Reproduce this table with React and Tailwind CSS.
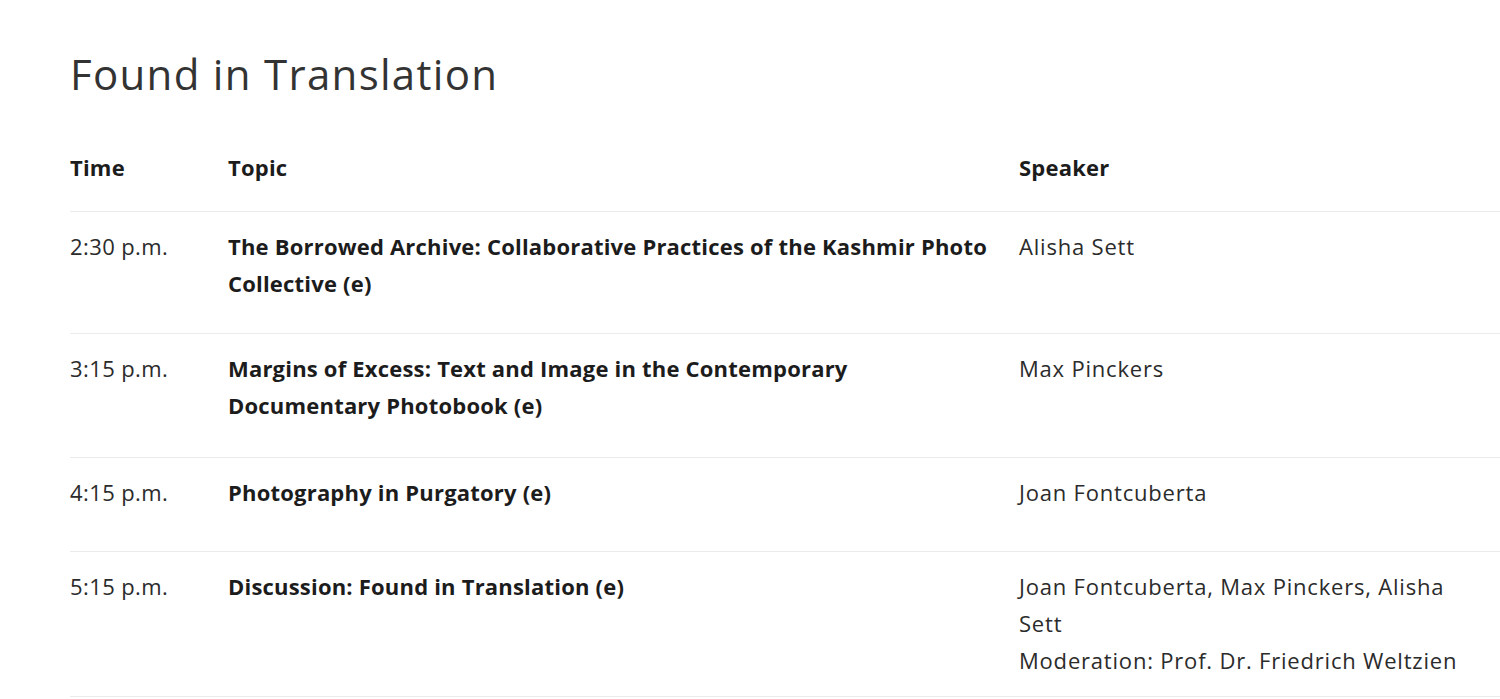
import React from "react";

const rows = [
    {
        time: "2:30 p.m.",
        topic: ["The Borrowed Archive: Collaborative Practices of the Kashmir Photo", "Collective (e)"],
        speaker: ["Alisha Sett"],
        h: "h-[122px]",
    },
    {
        time: "3:15 p.m.",
        topic: ["Margins of Excess: Text and Image in the Contemporary", "Documentary Photobook (e)"],
        speaker: ["Max Pinckers"],
        h: "h-[124px]",
    },
    {
        time: "4:15 p.m.",
        topic: ["Photography in Purgatory (e)"],
        speaker: ["Joan Fontcuberta"],
        h: "h-[94px]",
    },
    {
        time: "5:15 p.m.",
        topic: ["Discussion: Found in Translation (e)"],
        speaker: ["Joan Fontcuberta, Max Pinckers, Alisha", "Sett", "Moderation: Prof. Dr. Friedrich Weltzien"],
        h: "h-[145px]",
    },
];

const Lines = ({ lines }) =>
    lines.map((l, i) => (
        <React.Fragment key={i}>
            {i > 0 && <br />}
            {l}
        </React.Fragment>
    ));

export default function App() {
    return (
        <div className="min-h-screen bg-white pl-[70px] pt-[49px] font-['Open_Sans',sans-serif] text-[#2b2b2b]">
            <h1 className="text-[42px] leading-[50px] font-normal tracking-[1.3px] text-[#333]">Found in Translation</h1>

            <div className="mt-[50px] text-[22px] leading-[37px] tracking-[0.8px]">
                <div className="flex border-b border-[#ebebeb] pb-[25px] font-bold tracking-[0.2px] text-[#1c1c1c]">
                    <div className="w-[158px] shrink-0">Time</div>
                    <div className="w-[791px] shrink-0">Topic</div>
                    <div className="flex-1">Speaker</div>
                </div>

                {rows.map((r) => (
                    <div key={r.time} className={`flex border-b border-[#ebebeb] pt-[16px] ${r.h}`}>
                        <div className="w-[158px] shrink-0 whitespace-nowrap tracking-[0.4px]">{r.time}</div>
                        <div className="w-[791px] shrink-0 whitespace-nowrap font-bold tracking-[0.2px] text-[#1c1c1c]">
                            <Lines lines={r.topic} />
                        </div>
                        <div className="flex-1 whitespace-nowrap">
                            <Lines lines={r.speaker} />
                        </div>
                    </div>
                ))}
            </div>
        </div>
    );
}
